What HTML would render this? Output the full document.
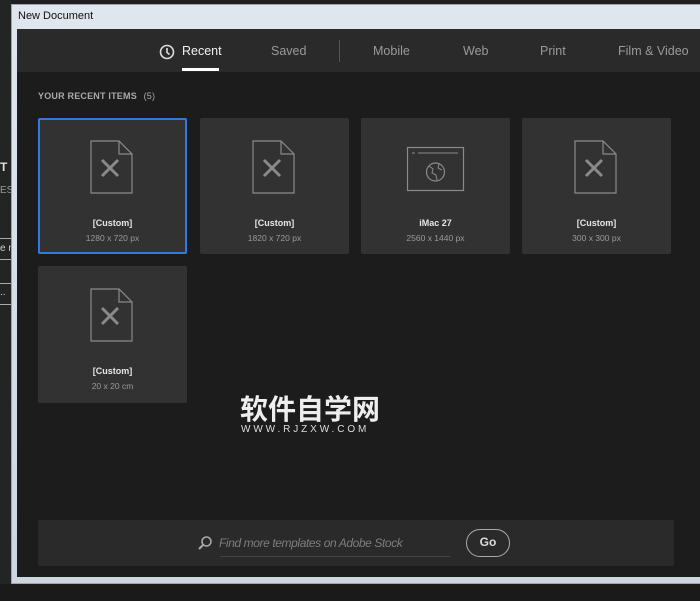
<!DOCTYPE html>
<html><head><meta charset="utf-8"><style>
*{margin:0;padding:0;box-sizing:border-box}
body{width:700px;height:601px;background:#1f1f1f;position:relative;overflow:hidden;font-family:"Liberation Sans",sans-serif}
.a{position:absolute}
.left{left:0;top:0;width:12px;height:601px;background:#232525}
.frame{left:11px;top:4px;width:700px;height:580px;background:linear-gradient(#dfe6ee,#cdd6df);border:1px solid #9aa4ae}
.title{left:18px;top:10px;font-size:11px;color:#111}
.inner{left:17px;top:29px;width:683px;height:548px;background:#1c1c1c}
.hdr{left:17px;top:29px;width:683px;height:43px;background:#2a2a2a}
.tab{top:44px;font-size:12.5px;color:#9a9a9a}
.card{background:#323232;border-radius:2px;width:149px;height:136px}
.card svg{position:absolute;left:50px;top:20px}
.t1{position:absolute;width:100%;top:100px;text-align:center;font-size:9px;color:#e6e6e6;font-weight:bold}
.t2{position:absolute;width:100%;top:115px;text-align:center;font-size:8.5px;color:#9a9a9a}
</style></head><body>
<div class="a left"></div>
<div class="a" style="left:0;top:160px;color:#ddd;font-size:12px;font-weight:bold">T</div>
<div class="a" style="left:0;top:185px;color:#999;font-size:10px">ES</div>
<div class="a" style="left:0;top:238px;width:12px;height:22px;border:1px solid #aaa;border-left:none;color:#ccc;font-size:10px;padding-top:4px;white-space:nowrap;overflow:hidden">e n</div>
<div class="a" style="left:0;top:283px;width:12px;height:22px;border:1px solid #aaa;border-left:none;color:#ccc;font-size:10px;padding-top:3px">..</div>
<div class="a frame"></div>
<div class="a title">New Document</div>
<div class="a inner"></div>
<div class="a hdr"></div>
<svg class="a" style="left:159px;top:44px" width="16" height="16"><circle cx="8" cy="8" r="6.5" fill="none" stroke="#ddd" stroke-width="1.6"/><path d="M8 4v4.5l2.5 2" fill="none" stroke="#ddd" stroke-width="1.6"/></svg>
<div class="a tab" style="left:182px;color:#f0f0f0">Recent</div>
<div class="a" style="left:182px;top:68px;width:37px;height:3px;background:#fff"></div>
<div class="a tab" style="left:271px">Saved</div>
<div class="a" style="left:339px;top:40px;width:1px;height:22px;background:#555"></div>
<div class="a tab" style="left:373px">Mobile</div>
<div class="a tab" style="left:463px">Web</div>
<div class="a tab" style="left:540px">Print</div>
<div class="a tab" style="left:618px">Film &amp; Video</div>
<div class="a" style="left:38px;top:91px;font-size:9px;font-weight:bold;color:#aaa;letter-spacing:.2px">YOUR RECENT ITEMS <span style="font-weight:normal;margin-left:4px">(5)</span></div>

<div class="a card" style="left:38px;top:118px;box-shadow:inset 0 0 0 2px #2d7be0"><svg width="48" height="60"><path d="M3 3h28l13 13v39H3z M31 3v13h13" fill="none" stroke="#8a8a8a" stroke-width="1.2"/><path d="M14 22l16 16M30 22L14 38" fill="none" stroke="#8a8a8a" stroke-width="3"/></svg><div class="t1">[Custom]</div><div class="t2">1280 x 720 px</div></div>
<div class="a card" style="left:200px;top:118px"><svg width="48" height="60"><path d="M3 3h28l13 13v39H3z M31 3v13h13" fill="none" stroke="#8a8a8a" stroke-width="1.2"/><path d="M14 22l16 16M30 22L14 38" fill="none" stroke="#8a8a8a" stroke-width="3"/></svg><div class="t1">[Custom]</div><div class="t2">1820 x 720 px</div></div>
<div class="a card" style="left:361px;top:118px"><svg width="60" height="50" style="left:45px;top:28px"><rect x="1.5" y="1.5" width="56" height="43" fill="none" stroke="#8a8a8a" stroke-width="1.2"/><path d="M6 7h3M12 7h40" stroke="#8a8a8a"/><circle cx="29.5" cy="26" r="9" fill="none" stroke="#8a8a8a" stroke-width="1.2"/><path d="M23 20l4 3-1 4 4 2 1 5M33 18l-1 4 4 2" fill="none" stroke="#8a8a8a"/></svg><div class="t1">iMac 27</div><div class="t2">2560 x 1440 px</div></div>
<div class="a card" style="left:522px;top:118px"><svg width="48" height="60"><path d="M3 3h28l13 13v39H3z M31 3v13h13" fill="none" stroke="#8a8a8a" stroke-width="1.2"/><path d="M14 22l16 16M30 22L14 38" fill="none" stroke="#8a8a8a" stroke-width="3"/></svg><div class="t1">[Custom]</div><div class="t2">300 x 300 px</div></div>
<div class="a card" style="left:38px;top:266px;height:137px"><svg width="48" height="60"><path d="M3 3h28l13 13v39H3z M31 3v13h13" fill="none" stroke="#8a8a8a" stroke-width="1.2"/><path d="M14 22l16 16M30 22L14 38" fill="none" stroke="#8a8a8a" stroke-width="3"/></svg><div class="t1">[Custom]</div><div class="t2">20 x 20 cm</div></div>

<div class="a" style="left:240px;top:395px;font-family:'Liberation Sans','Noto Sans CJK SC',sans-serif;font-size:28px;font-weight:bold;color:#eee;letter-spacing:0px;line-height:30px">软件自学网</div>
<div class="a" style="left:241px;top:424px;font-size:10px;color:#ddd;letter-spacing:2.9px">WWW.RJZXW.COM</div>

<div class="a" style="left:38px;top:520px;width:636px;height:46px;background:#2a2a2a;border-radius:2px"></div>
<svg class="a" style="left:197px;top:535px" width="16" height="16"><circle cx="9.5" cy="6.5" r="4.5" fill="none" stroke="#aaa" stroke-width="1.6"/><path d="M6.5 9.5L2 14" stroke="#aaa" stroke-width="2"/></svg>
<div class="a" style="left:219px;top:536px;font-size:12px;font-style:italic;color:#7d7d7d;letter-spacing:-.4px">Find more templates on Adobe Stock</div>
<div class="a" style="left:220px;top:556px;width:230px;height:1px;background:#444"></div>
<div class="a" style="left:466px;top:529px;width:44px;height:28px;border:1.5px solid #aaa;border-radius:14px;color:#ddd;font-size:12px;font-weight:bold;text-align:center;line-height:25px">Go</div>
<div class="a" style="left:0;top:584px;width:700px;height:17px;background:#1a1a1a"></div>
</body></html>
